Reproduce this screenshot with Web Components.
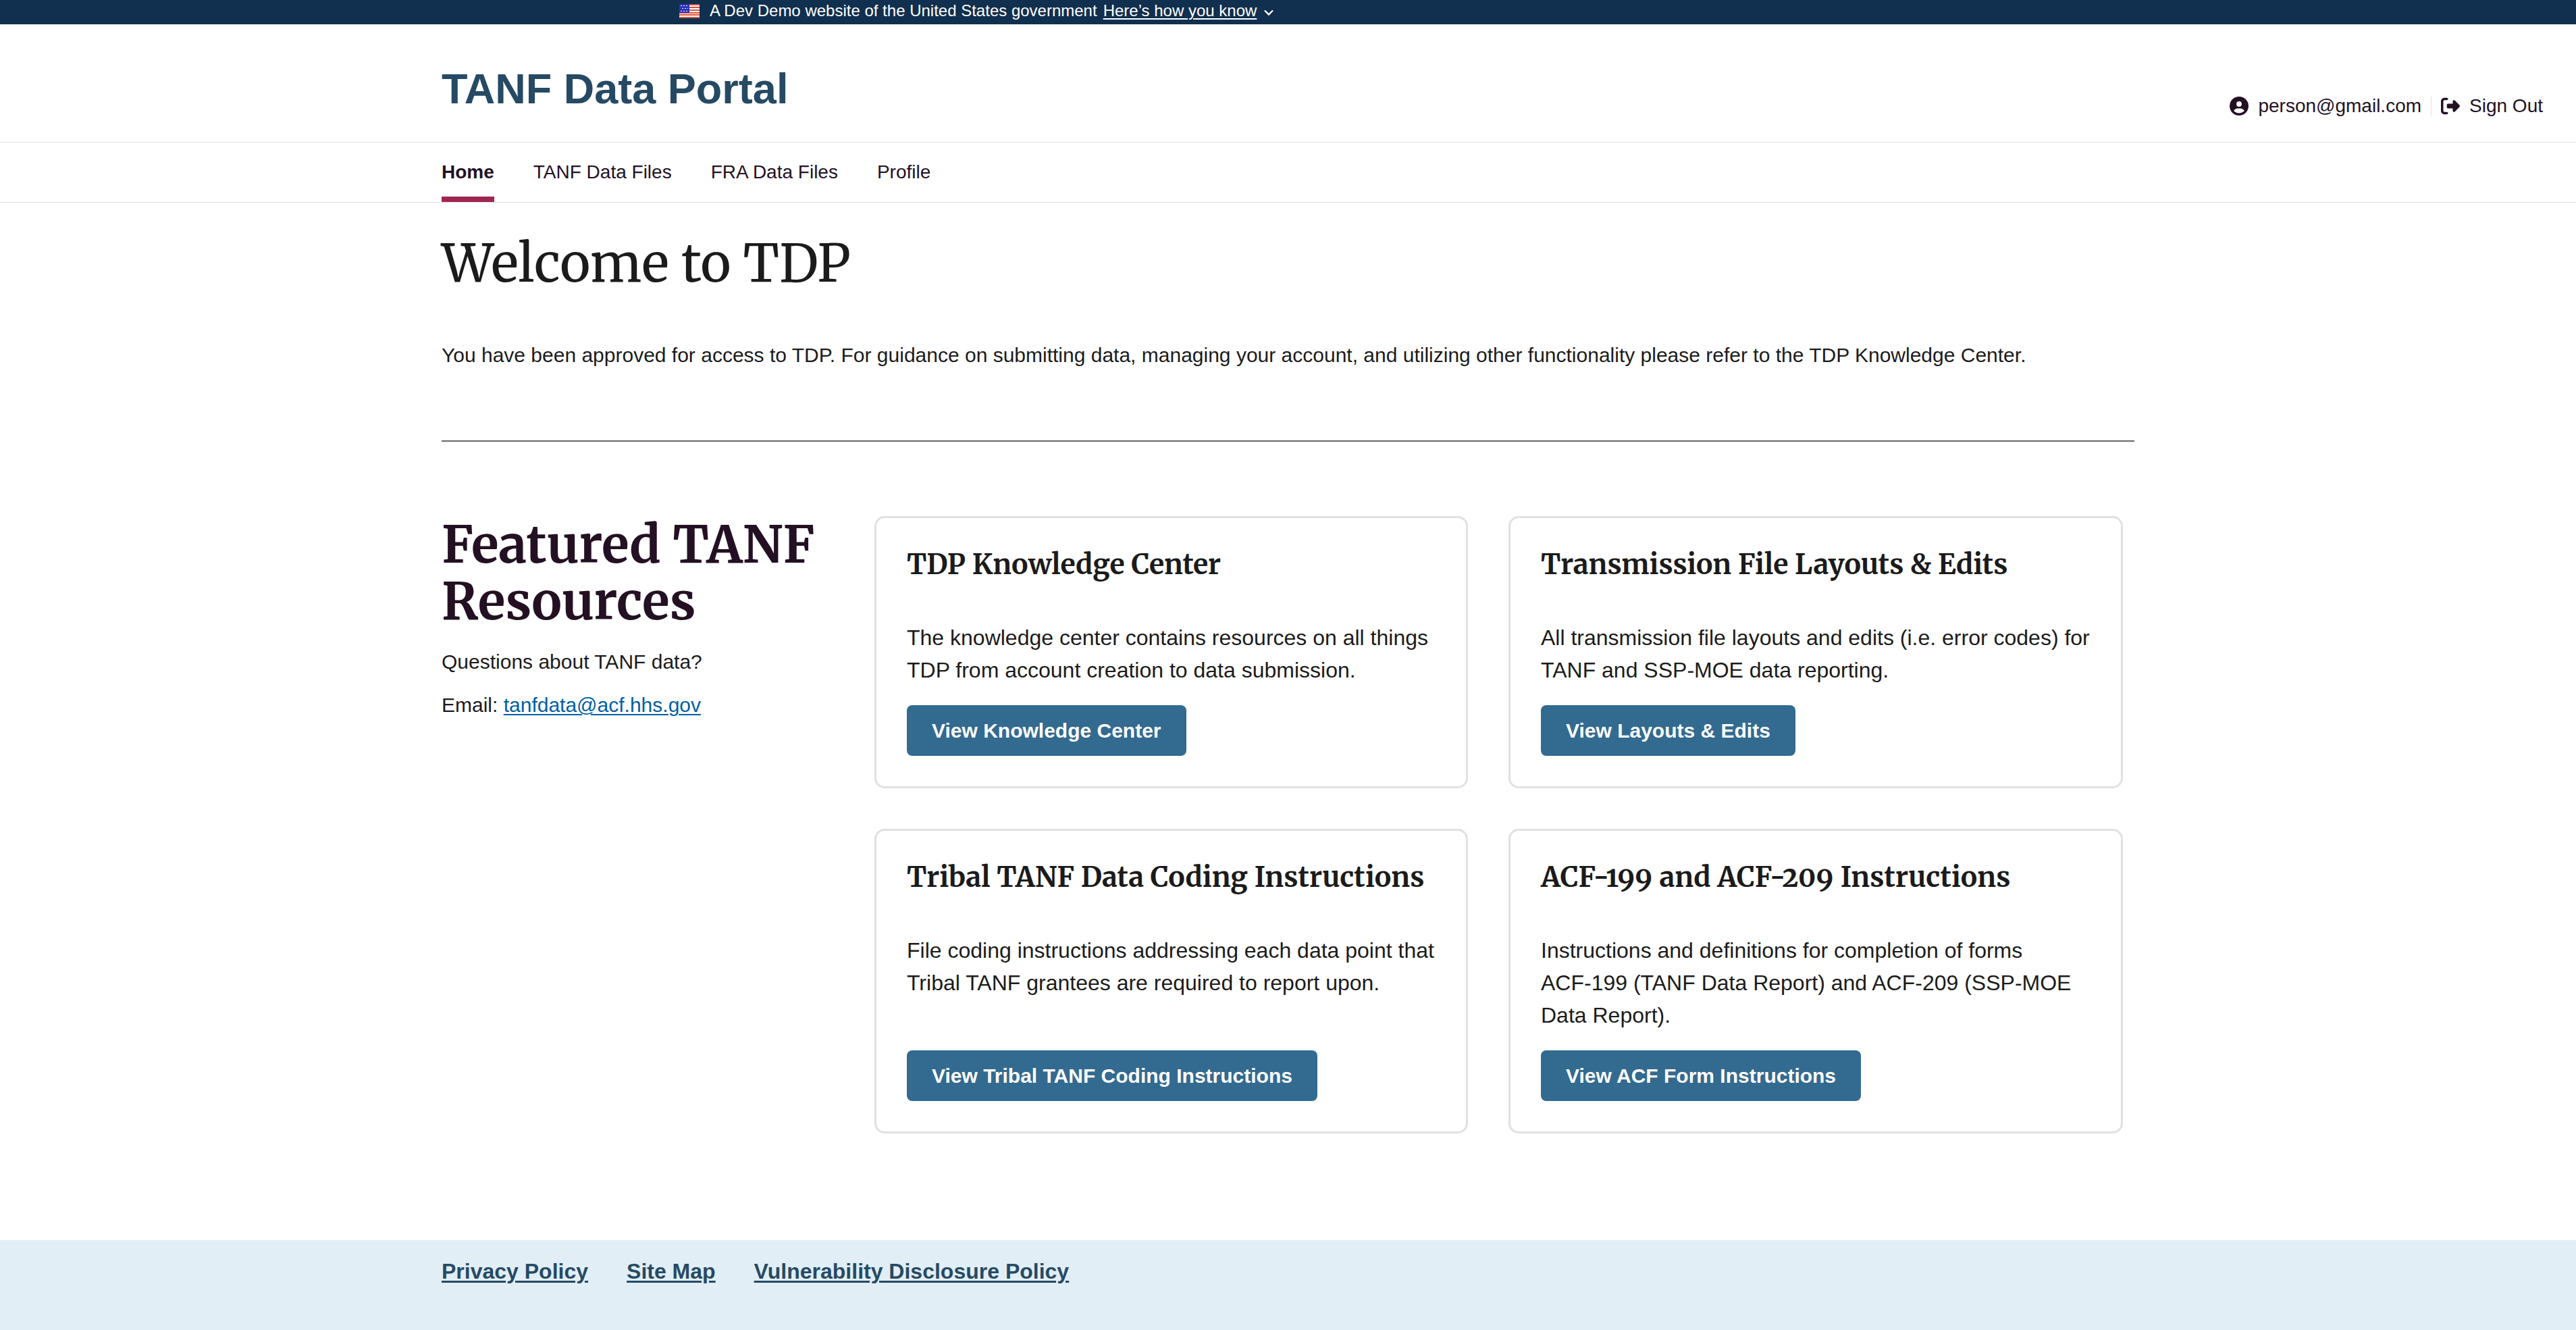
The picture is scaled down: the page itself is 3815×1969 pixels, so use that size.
<!DOCTYPE html>
<html lang="en">
<head>
<meta charset="utf-8">
<title>TANF Data Portal</title>
<style>
  :root {
    --page: 2507px;
    --sans: "Liberation Sans", Arial, sans-serif;
    --serif: "Merriweather", "DejaVu Serif Condensed", "DejaVu Serif", serif;
    --ink: #1b1b1b;
    --plum: #231123;
    --navy: #264a64;
    --line: #dfe1e2;
  }
  body { margin: 0; background: #fff; color: var(--ink); font: 30px/48px var(--sans); }
  tdp-app { min-height: 100vh; }
</style>
</head>
<body>
<tdp-app>
  <tdp-banner slot="top"></tdp-banner>
  <tdp-header slot="top" email="person@gmail.com">TANF Data Portal</tdp-header>
  <tdp-nav slot="top">
    <tdp-nav-item href="#home" current>Home</tdp-nav-item>
    <tdp-nav-item href="#tanf">TANF Data Files</tdp-nav-item>
    <tdp-nav-item href="#fra">FRA Data Files</tdp-nav-item>
    <tdp-nav-item href="#profile">Profile</tdp-nav-item>
  </tdp-nav>
  <tdp-welcome>
    <span slot="title">Welcome to TDP</span>
    You have been approved for access to TDP. For guidance on submitting data, managing your account, and utilizing other functionality please refer to the TDP Knowledge Center.
  </tdp-welcome>
  <tdp-resources>
    <tdp-contact slot="aside" email="tanfdata@acf.hhs.gov">Featured TANF Resources</tdp-contact>
    <tdp-card action="View Knowledge Center">
      <span slot="title">TDP Knowledge Center</span>
      The knowledge center contains resources on all things TDP from account creation to data submission.
    </tdp-card>
    <tdp-card action="View Layouts &amp; Edits">
      <span slot="title">Transmission File Layouts &amp; Edits</span>
      All transmission file layouts and edits (i.e. error codes) for TANF and SSP-MOE data reporting.
    </tdp-card>
    <tdp-card action="View Tribal TANF Coding Instructions">
      <span slot="title">Tribal TANF Data Coding Instructions</span>
      File coding instructions addressing each data point that Tribal TANF grantees are required to report upon.
    </tdp-card>
    <tdp-card action="View ACF Form Instructions">
      <span slot="title">ACF-199 and ACF-209 Instructions</span>
      Instructions and definitions for completion of forms<br>
      ACF-199 (TANF Data Report) and ACF-209 (SSP-MOE Data Report).
    </tdp-card>
  </tdp-resources>
  <tdp-footer slot="bottom">
    <tdp-footer-link href="#privacy">Privacy Policy</tdp-footer-link>
    <tdp-footer-link href="#map">Site Map</tdp-footer-link>
    <tdp-footer-link href="#vdp">Vulnerability Disclosure Policy</tdp-footer-link>
  </tdp-footer>
</tdp-app>
<script>
  const component = (name, render) => customElements.define(name, class extends HTMLElement {
    connectedCallback() {
      if (this.shadowRoot) return;
      const t = document.createElement('template');
      t.innerHTML = render(this);
      this.attachShadow({ mode: 'open' }).append(t.content.cloneNode(true));
    }
  });
  const esc = s => (s || '').replace(/&/g, '&amp;').replace(/"/g, '&quot;');

  component('tdp-app', () => `
    <style>
      :host { display: flex; flex-direction: column; }
      main { flex: 1; }
    </style>
    <slot name="top"></slot>
    <main><slot></slot></main>
    <slot name="bottom"></slot>`);

  component('tdp-flag', () => `
    <style>:host { display: block; width: 30px; height: 21px; } svg { display: block; width: 100%; height: 100%; }</style>
    <svg viewBox="0 0 30 21" aria-hidden="true">
      <path fill="#fff" d="M0 0h30v21H0z"/>
      <path fill="#d8523c" d="M0 0h30v2H0zM0 4h30v2H0zM0 8h30v2H0zM0 12h30v2H0zM0 15h30v2H0zM0 19h30v2H0z"/>
      <path fill="#2b35b8" d="M0 0h15v13H0z"/>
      <path fill="#fff" d="M2 2h2v1H2zM6 2h2v1H6zM10 2h2v1h-2zM4 6h2v1H4zM8 6h2v1H8zM12 6h1v1h-1zM2 10h2v1H2zM6 10h2v1H6zM10 10h2v1h-2z"/>
    </svg>`);

  component('tdp-banner', () => `
    <style>
      :host { display: block; background: #112f4e; color: #fff; font-size: 24px; line-height: 32px; }
      div { display: flex; align-items: center; box-sizing: border-box; max-width: 1803px; height: 36px; margin: 0 auto; padding-bottom: 4px; }
      span { margin: 0 9px 0 15px; }
      button { display: flex; align-items: center; gap: 10px; padding: 0; border: 0; background: none;
        color: inherit; font: inherit; cursor: pointer; }
      u { text-underline-offset: 3px; text-decoration-thickness: 2px; }
      svg { width: 16px; height: 10px; margin-top: 6px; }
    </style>
    <div>
      <tdp-flag></tdp-flag>
      <span>A Dev Demo website of the United States government</span>
      <button type="button"><u>Here’s how you know</u>
        <svg viewBox="0 0 16 10" fill="none" stroke="#fff" stroke-width="2.4" aria-hidden="true"><path d="M2 1.5l6 6 6-6"/></svg>
      </button>
    </div>`);

  component('tdp-header', el => `
    <style>
      :host { display: grid; grid-template-columns: 1fr minmax(auto, var(--page)) 1fr; align-items: center;
        height: 174px; border-bottom: 1px solid var(--line); }
      h1 { grid-column: 2; grid-row: 1; margin: 0; padding-top: 15px; color: var(--navy); font-size: 63px; line-height: 70px; }
      nav { grid-column: 2 / 4; grid-row: 1; justify-self: end; display: flex; align-items: center;
        padding: 68px 49px 0 0; font-size: 28px; line-height: 32px; }
      a { display: flex; align-items: center; gap: 14px; color: var(--plum); text-decoration: none; }
      a + a { margin-left: 14px; padding-left: 14px; border-left: 1px solid var(--line); height: 28px; }
      svg { width: 28px; height: 28px; }
    </style>
    <h1><slot></slot></h1>
    <nav aria-label="Account">
      <a href="#profile">
        <svg viewBox="0 0 512 512" aria-hidden="true"><path fill="currentColor" d="M399 384.200C376.900 345.800 335.400 320 288 320H224c-47.400 0-88.900 25.800-111 64.200c35.200 39.200 86.200 63.800 143 63.800s107.800-24.700 143-63.800zM0 256a256 256 0 1 1 512 0A256 256 0 1 1 0 256zm256 16a72 72 0 1 0 0-144 72 72 0 1 0 0 144z"/></svg>${esc(el.getAttribute('email'))}</a>
      <a href="#sign-out">
        <svg viewBox="0 0 512 512" aria-hidden="true"><path fill="currentColor" d="M377.900 105.900L500.700 228.700c7.200 7.200 11.300 17.100 11.300 27.300s-4.100 20.100-11.300 27.300L377.900 406.100c-6.400 6.400-15 9.900-24 9.900c-18.700 0-33.900-15.200-33.900-33.900l0-62.100-128 0c-17.700 0-32-14.300-32-32l0-64c0-17.700 14.300-32 32-32l128 0 0-62.100c0-18.700 15.200-33.900 33.900-33.900c9 0 17.600 3.600 24 9.900zM160 96L96 96c-17.700 0-32 14.300-32 32l0 256c0 17.700 14.300 32 32 32l64 0c17.700 0 32 14.300 32 32s-14.300 32-32 32l-64 0c-53 0-96-43-96-96L0 128C0 75 43 32 96 32l64 0c17.700 0 32 14.300 32 32s-14.300 32-32 32z"/></svg>Sign Out</a>
    </nav>`);

  component('tdp-nav', () => `
    <style>
      :host { display: block; border-bottom: 1px solid var(--line); }
      nav { display: flex; gap: 58px; max-width: var(--page); margin: 0 auto; }
    </style>
    <nav aria-label="Primary"><slot></slot></nav>`);

  component('tdp-nav-item', el => `
    <style>
      :host { display: block; }
      a { display: block; padding: 28px 0 20px; border-bottom: 8px solid transparent;
        color: var(--plum); font-size: 28px; line-height: 32px; text-decoration: none; }
      :host([current]) a { border-color: #a02651; font-weight: bold; }
    </style>
    <a href="${el.getAttribute('href')}"><slot></slot></a>`);

  component('tdp-welcome', () => `
    <style>
      :host { display: block; max-width: var(--page); margin: 0 auto; padding-top: 45px; }
      h2 { margin: 0; font: 77px/90px var(--serif); }
      p { margin: 67px 0 102px; }
      hr { margin: 0; border: 0; height: 2px; background: linear-gradient(#555 50%, #777 50%); }
    </style>
    <h2><slot name="title"></slot></h2>
    <p><slot></slot></p>
    <hr>`);

  component('tdp-resources', () => `
    <style>
      :host { display: grid; grid-template-columns: 641fr 1866fr; max-width: var(--page); margin: 110px auto 158px; }
      section { display: grid; grid-template-columns: 879fr 910fr; gap: 60px; padding-right: 17px; }
    </style>
    <aside><slot name="aside"></slot></aside>
    <section><slot></slot></section>`);

  component('tdp-contact', el => `
    <style>
      :host { display: block; }
      h2 { margin: 0 0 24px; max-width: 582px; color: var(--plum); font: bold 75px/84px var(--serif); }
      p { margin: 0 0 16px; }
      a { color: #005ea2; text-underline-offset: 3px; text-decoration-thickness: 2px; }
    </style>
    <h2><slot></slot></h2>
    <p>Questions about TANF data?</p>
    <p>Email: <a href="mailto:${esc(el.getAttribute('email'))}">${esc(el.getAttribute('email'))}</a></p>`);

  component('tdp-card', el => `
    <style>
      :host { display: flex; flex-direction: column; align-items: flex-start; box-sizing: border-box;
        padding: 45px; border: 3px solid var(--line); border-radius: 15px; font-size: 32px; line-height: 48px; }
      h3 { margin: 0 0 60px; font: bold 41px/48px var(--serif); font-variant-numeric: oldstyle-nums; }
      p { margin: 0 0 28px; }
      button { margin-top: auto; padding: 0 37px; height: 75px; border: 0; border-radius: 8px;
        background: #336a90; color: #fff; font: bold 30px/32px var(--sans); cursor: pointer; }
    </style>
    <h3><slot name="title"></slot></h3>
    <p><slot></slot></p>
    <button type="button">${esc(el.getAttribute('action'))}</button>`);

  component('tdp-footer', () => `
    <style>
      :host { display: block; background: #e1eef6; }
      nav { display: flex; flex-wrap: wrap; gap: 57px; max-width: var(--page); margin: 0 auto; padding: 22px 0 63px; }
    </style>
    <nav aria-label="Footer"><slot></slot></nav>`);

  component('tdp-footer-link', el => `
    <style>
      :host { display: block; }
      a { color: var(--navy); font-size: 32px; line-height: 48px; font-weight: bold; text-underline-offset: 3px; text-decoration-thickness: 3px; }
    </style>
    <a href="${el.getAttribute('href')}"><slot></slot></a>`);
</script>
</body>
</html>
